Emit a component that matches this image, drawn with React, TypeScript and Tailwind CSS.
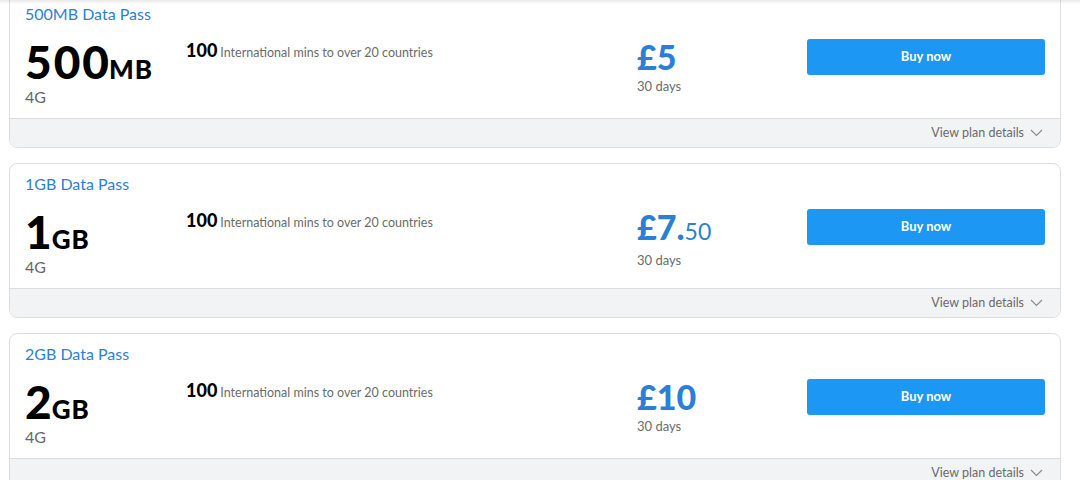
import React from 'react';

type Plan = {
  title: string;
  amount: string;
  unit: string;
  pounds: string;
  pence?: string;
};

const plans: Plan[] = [
  { title: '500MB Data Pass', amount: '500', unit: 'MB', pounds: '£5' },
  { title: '1GB Data Pass', amount: '1', unit: 'GB', pounds: '£7.', pence: '50' },
  { title: '2GB Data Pass', amount: '2', unit: 'GB', pounds: '£10' },
];

const Chevron: React.FC = () => (
  <svg width="13" height="8" viewBox="0 0 13 8" fill="none" className="ml-[6px]">
    <path d="M1 1l5.5 5.5L12 1" stroke="#8a8a8a" strokeWidth="1.1" />
  </svg>
);

const PlanCard: React.FC<{ plan: Plan }> = ({ plan }) => {
  return (
    <div className="rounded-[8px] border border-[#dedede] bg-white overflow-hidden">
      <div className="px-[15px] pt-[10px] pb-[11px]">
        <div className="text-[16px] leading-[20px] text-[#2b7fd6]">{plan.title}</div>
        <div className="mt-[16px] flex items-start">
          <div className="w-[161px]">
            <div className="flex items-baseline text-black font-black">
              <span className="text-[46px] leading-[44px] tracking-[2px] -mr-[2px]">{plan.amount}</span>
              <span className="text-[26px] leading-[44px] tracking-[1px]">{plan.unit}</span>
            </div>
            <div className="-mt-[4px] text-[16px] leading-[20px] text-[#666]">4G</div>
          </div>
          <div className="flex-1 flex items-baseline">
            <span className="text-[18px] leading-[20px] font-black text-black">100</span>
            <span className="ml-[3px] text-[12.5px] leading-[20px] text-[#6b6b6b]">
              International mins to over 20 countries
            </span>
          </div>
          <div className="w-[170px] -mt-[1px]">
            <div className="flex items-baseline text-[#2b7fd6]">
              <span className="text-[34px] leading-[36px] font-black">{plan.pounds}</span>
              {plan.pence && <span className="text-[23px] leading-[36px]">{plan.pence}</span>}
            </div>
            <div className="mt-[2px] text-[13px] leading-[18px] text-[#6b6b6b]">30 days</div>
          </div>
          <button className="-mt-[1px] w-[238px] h-[36px] rounded-[3px] bg-[#1c97f3] text-white text-[13px] font-bold">
            Buy now
          </button>
        </div>
      </div>
      <div className="h-[29px] border-t border-[#dcdcdc] bg-[#f1f3f4] flex items-center justify-end pr-[17px]">
        <span className="text-[12.5px] text-[#6b6b6b]">View plan details</span>
        <Chevron />
      </div>
    </div>
  );
};

const App: React.FC = () => {
  return (
    <div className="relative h-[480px] overflow-hidden bg-white" style={{ fontFamily: 'Lato, "Noto Sans", sans-serif' }}>
      <div className="-mt-[7px] ml-[9px] mr-[19px] flex flex-col gap-[15px]">
        {plans.map((p) => (
          <PlanCard key={p.title} plan={p} />
        ))}
      </div>
      <div className="absolute top-0 left-0 right-0 h-[4px] bg-gradient-to-b from-[#00000018] to-transparent" />
    </div>
  );
};

export default App;
